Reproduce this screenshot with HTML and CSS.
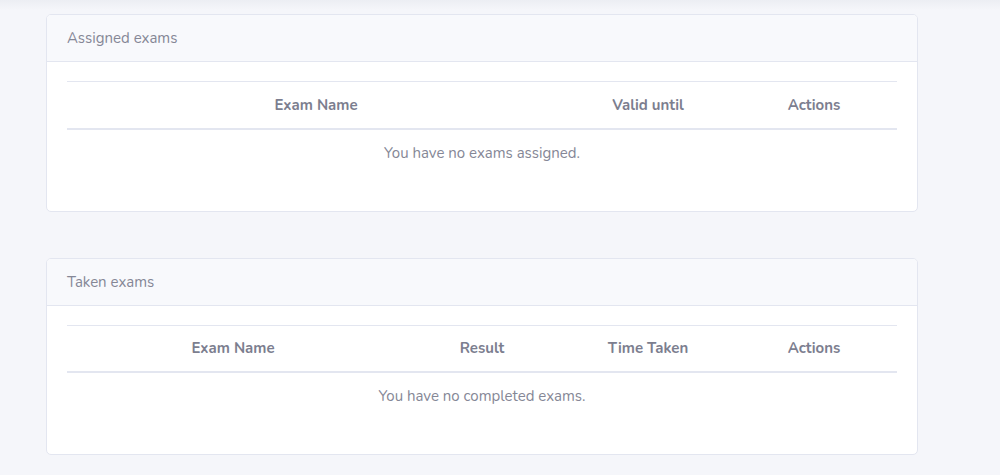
FILE: index.html
```html
<!DOCTYPE html>
<html lang="en">
<head>
<meta charset="utf-8">
<title>Exams</title>
<link rel="stylesheet" href="styles.css">
</head>
<body>
<div class="page">
  <section class="card">
    <div class="card-header">Assigned exams</div>
    <div class="card-body">
      <table class="table">
        <thead>
          <tr>
            <th class="w60">Exam Name</th>
            <th class="w20">Valid until</th>
            <th class="w20">Actions</th>
          </tr>
        </thead>
        <tbody>
          <tr><td colspan="3">You have no exams assigned.</td></tr>
        </tbody>
      </table>
    </div>
  </section>
  <section class="card">
    <div class="card-header">Taken exams</div>
    <div class="card-body">
      <table class="table">
        <thead>
          <tr>
            <th class="w40">Exam Name</th>
            <th class="w20">Result</th>
            <th class="w20">Time Taken</th>
            <th class="w20">Actions</th>
          </tr>
        </thead>
        <tbody>
          <tr><td colspan="4">You have no completed exams.</td></tr>
        </tbody>
      </table>
    </div>
  </section>
</div>
</body>
</html>
```
FILE: styles.css
```css
html, body {
  margin: 0;
  padding: 0;
}
body {
  background: linear-gradient(#eceef3 0px, #f5f6fa 10px) #f5f6fa;
  font-family: "Nunito", "Lato", "Noto Sans", sans-serif;
  color: #858796;
  min-height: 475px;
}
.page {
  padding: 14px 0 0 46px;
  width: 872px;
  display: flex;
  flex-direction: column;
  gap: 46px;
}
.card {
  background: #fff;
  border: 1px solid #e3e6f0;
  border-radius: 5px;
  overflow: hidden;
}
.card-header {
  background: #f8f9fc;
  border-bottom: 1px solid #e3e6f0;
  padding: 1px 20px 1px;
  height: 44px;
  line-height: 44px;
  font-size: 15px;
  color: #858796;
}
.card-body {
  padding: 19px 20px 20px;
}
.table {
  width: 100%;
  border-collapse: collapse;
  margin-bottom: 16px;
  table-layout: fixed;
}
.table th,
.table td {
  box-sizing: border-box;
}
.table th {
  border-top: 1px solid #e3e6f0;
  border-bottom: 2px solid #e3e6f0;
  height: 47px;
  padding: 0 12px;
  font-size: 15px;
  font-weight: 700;
  color: #7c7e8f;
  text-align: center;
}
.table td {
  padding: 12px 12px 11px;
  line-height: 22px;
  font-size: 15px;
  color: #858796;
  text-align: center;
}
.w60 { width: 60%; }
.w40 { width: 40%; }
.w20 { width: 20%; }
```
